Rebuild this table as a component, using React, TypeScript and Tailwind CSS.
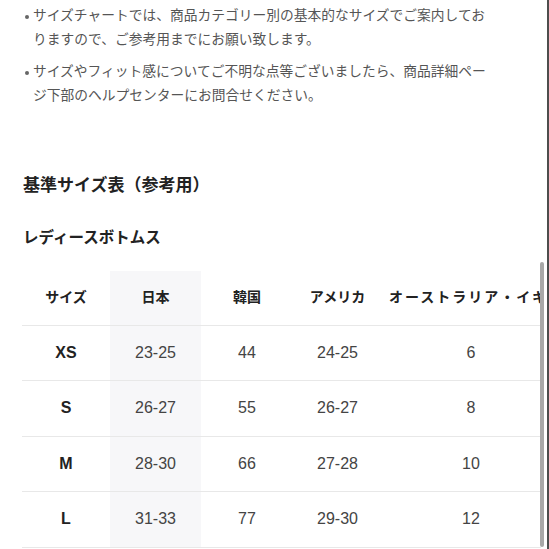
const notes = [
  'サイズチャートでは、商品カテゴリー別の基本的なサイズでご案内しておりますので、ご参考用までにお願い致します。',
  'サイズやフィット感についてご不明な点等ございましたら、商品詳細ページ下部のヘルプセンターにお問合せください。',
];

const headers = ['サイズ', '日本', '韓国', 'アメリカ', 'オーストラリア・イギリス'];

const rows = [
  ['XS', '23-25', '44', '24-25', '6'],
  ['S', '26-27', '55', '26-27', '8'],
  ['M', '28-30', '66', '27-28', '10'],
  ['L', '31-33', '77', '29-30', '12'],
];

const colWidths = ['w-[88px]', 'w-[91px]', 'w-[92px]', 'w-[89px]', 'w-[184px]'];

export default function App() {
  return (
    <div
      className="relative w-[549px] h-[549px] overflow-hidden bg-white border-r-2 border-[#4d4d4d]"
      style={{ fontFamily: '"Liberation Sans", "Noto Sans CJK JP", sans-serif' }}
    >
      {/* Notes */}
      <ul className="flex flex-col gap-2 pt-1 pl-[20px]">
        {notes.map((n) => (
          <li key={n} className="flex text-[13.75px] leading-6 text-[#555]">
            <span className="w-[13px] shrink-0 flex justify-center pt-[11px]">
              <span className="w-[4px] h-[4px] rounded-full bg-[#666]"></span>
            </span>
            <p className="w-[462px]">{n}</p>
          </li>
        ))}
      </ul>

      {/* Titles */}
      <h2 className="mt-[66px] pl-[23px] text-[17px] leading-6 font-bold text-[#222]">
        基準サイズ表（参考用）
      </h2>
      <h3 className="mt-[28px] pl-[23px] text-[15.5px] leading-6 font-bold text-[#222]">
        レディースボトムス
      </h3>

      {/* Table */}
      <div className="mt-[21px] ml-[22px] w-[519px] overflow-hidden">
        <table className="table-fixed border-collapse w-[544px]">
          <thead>
            <tr className="h-[54px] border-b border-[#e8e8e8]">
              {headers.map((h, i) => (
                <th
                  key={h}
                  className={`${colWidths[i]} text-[14px] font-bold text-[#222] whitespace-nowrap overflow-hidden ${
                    i === 1 ? 'bg-[#f7f7f9]' : ''
                  } ${i === 4 ? 'text-left pl-[7px] tracking-[2px]' : 'text-center'}`}
                >
                  {h}
                </th>
              ))}
            </tr>
          </thead>
          <tbody>
            {rows.map((r) => (
              <tr key={r[0]} className="h-[55.5px] border-b border-[#e8e8e8]">
                {r.map((c, i) => (
                  <td
                    key={i}
                    className={`text-center text-[16px] ${
                      i === 0 ? 'font-bold text-[#222]' : 'text-[#444]'
                    } ${i === 1 ? 'bg-[#f7f7f9]' : ''} ${i === 4 ? 'pr-[6px]' : ''}`}
                  >
                    {c}
                  </td>
                ))}
              </tr>
            ))}
          </tbody>
        </table>
      </div>

      {/* Scrollbar thumb */}
      <div className="absolute left-[540px] top-[262px] w-[4px] h-[285px] rounded-full bg-[#a8a8a8]"></div>
    </div>
  );
}
